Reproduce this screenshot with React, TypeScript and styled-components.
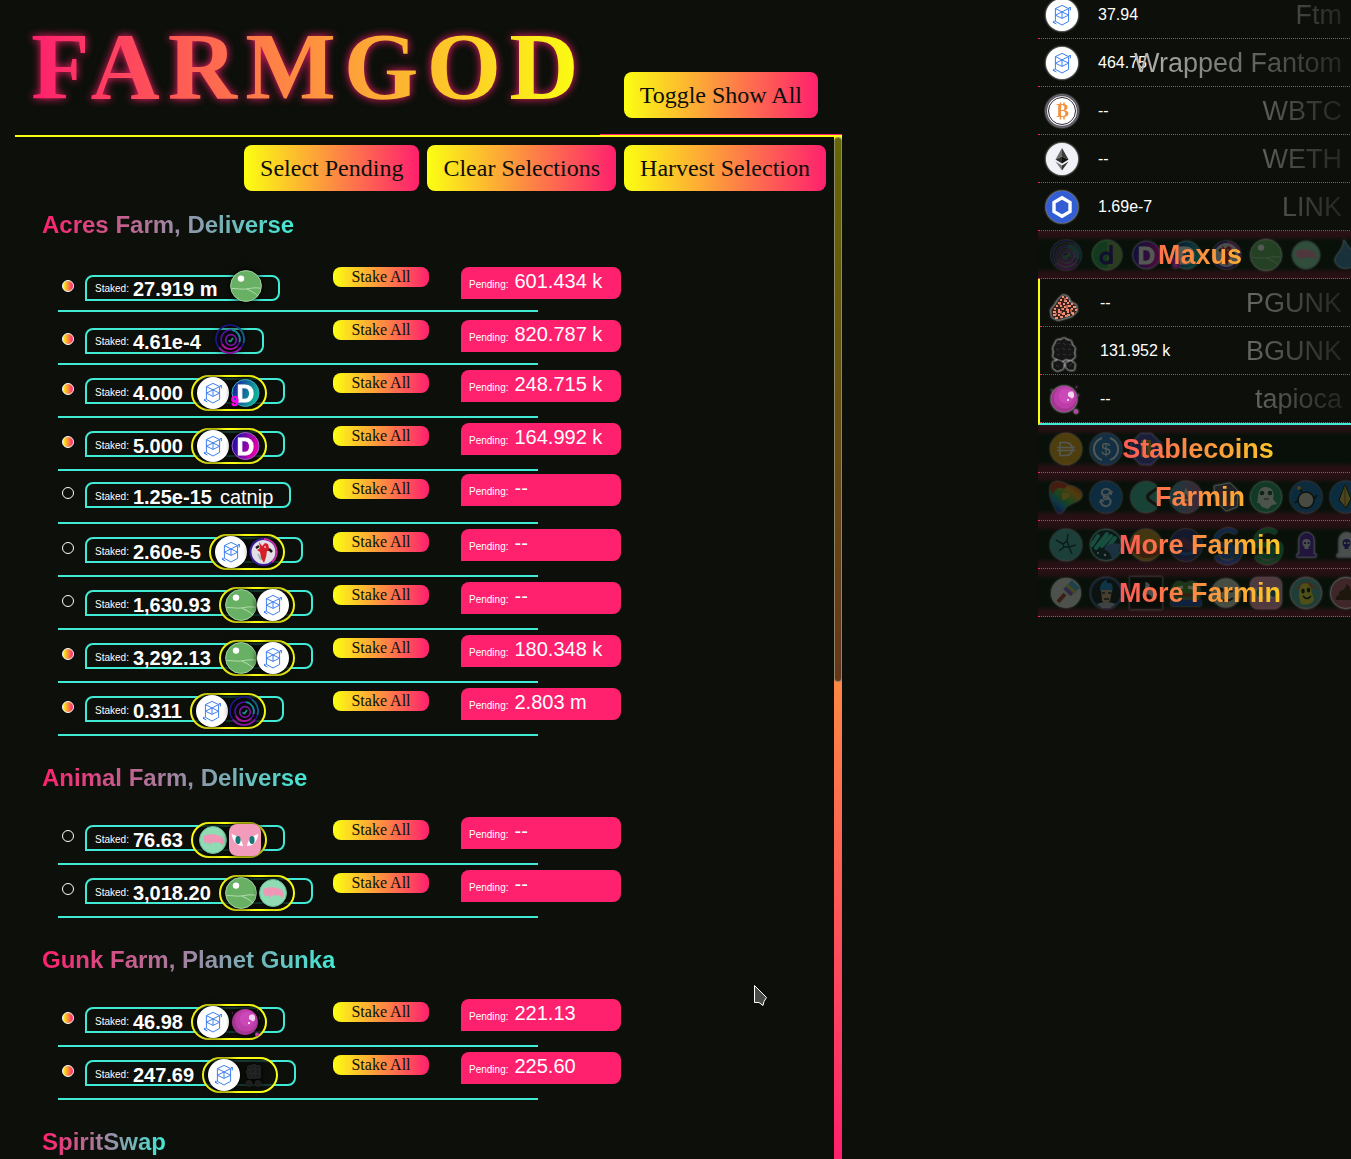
import React, { useState } from "react";
import styled, { createGlobalStyle, css } from "styled-components";

const ink = "#0c0f0a";
const pink = "#ff206e";
const yellow = "#fbff12";
const teal = "#41ead4";
const sans = '"Liberation Sans", Arial, sans-serif';
const serif = '"Liberation Serif", "Times New Roman", serif';

const GlobalStyle = createGlobalStyle`
  *, *::before, *::after { box-sizing: border-box; }
  body {
    margin: 0;
    background: ${ink};
    color: #fff;
    font-family: ${sans};
    overflow: hidden;
  }
`;

/* ---------- token artwork ---------- */

const Fantom = () => (
  <>
    <circle cx="16" cy="16" r="16" fill="#fff" />
    <g fill="none" stroke="#3f7ff0" strokeWidth="1" strokeLinejoin="round">
      <path d="M16 6.4 22.6 9.6V22.4L16 26 9.4 22.4V9.6Z" />
      <path d="M9.4 9.6 22.6 16.2M22.6 9.6 9.4 16.2 16 19.4 22.6 16.2M16 12.900V19.400" />
      <path d="M22.8 8.2 24.3 9.2V11.4M7.8 21.8V23.6L10.4 25" />
    </g>
    <circle cx="24.2" cy="8.8" r="0.9" fill="#3f7ff0" />
    <circle cx="7.8" cy="23.2" r="0.9" fill="#3f7ff0" />
  </>
);

const Acres = () => (
  <>
    <circle cx="16" cy="16" r="15.4" fill="#68b164" stroke="#9fd19b" />
    <circle cx="11" cy="8.6" r="3.2" fill="#fff" />
    <path
      d="M1.5 18.6C7 18.2 12 19.8 17 18.9S25 17.4 30.5 18.2M17 19.3C21 20.8 25 23 28 26"
      fill="none"
      stroke="#b4dcae"
    />
  </>
);

const Spiral = () => (
  <g fill="none" strokeWidth="1.7">
    <circle cx="16" cy="16" r="14" stroke="#1c1788" />
    <path d="M24 4.500A14 14 0 0 1 29.500 20" stroke="#0b6580" />
    <path d="M5 24.600A14 14 0 0 0 27 24.600" stroke="#8a179c" />
    <circle cx="16.500" cy="16.500" r="9.500" stroke="#4a12a0" />
    <path d="M18 7A9.500 9.500 0 0 1 25.500 19" stroke="#0e8f8f" />
    <path d="M8 21A9.500 9.500 0 0 0 23 23.500" stroke="#b01495" />
    <circle cx="17" cy="17" r="5.300" stroke="#7a16a8" />
    <path d="M14.500 17.500 16.500 18.500 19 15" stroke="#149a8e" />
  </g>
);

type LetterProps = {
  ring: string;
  from: string;
  to: string;
  letter: string;
  id: string;
  tag?: string;
};
const LetterCoin = ({ ring, from, to, letter, id, tag }: LetterProps) => (
  <>
    <defs>
      <linearGradient id={id} x1="0" x2="1" y1="0.300" y2="0.600">
        <stop offset="0.100" stopColor={from} />
        <stop offset="0.900" stopColor={to} />
      </linearGradient>
    </defs>
    <circle cx="16.500" cy="16" r="13.500" fill={`url(#${id})`} stroke={ring} />
    <text
      x="16.500"
      y="24.500"
      textAnchor="middle"
      fontFamily="Liberation Sans"
      fontWeight="700"
      fontSize="24"
      fill="#fff"
      stroke="#fff"
      strokeWidth="1"
    >
      {letter}
    </text>
    {tag && (
      <text
        x="2"
        y="29"
        fontFamily="Liberation Sans"
        fontWeight="700"
        fontSize="14"
        fill="#f0e"
        stroke="#f0e"
        strokeWidth="0.600"
      >
        {tag}
      </text>
    )}
  </>
);

const DeusTeal = () => (
  <LetterCoin id="dTeal" ring="#33b2bd" from="#1a2aa0" to="#10b09a" letter="D" tag="9" />
);
const DeusPink = () => (
  <LetterCoin id="dPink" ring="#a060d0" from="#2410a8" to="#e300a8" letter="D" />
);
const Dgreen = () => (
  <>
    <circle cx="17" cy="16" r="14.500" fill="#2f9950" stroke="#4ed06c" />
    <path d="M17 1.500A14.500 14.500 0 0 1 17 30.500Z" fill="#79a552" />
    <circle cx="16" cy="19" r="5" fill="none" stroke="#2a1080" strokeWidth="3.500" />
    <path d="M21 6V25" stroke="#2a1080" strokeWidth="3.500" />
  </>
);

const Parrot = () => (
  <>
    <circle cx="16.500" cy="16" r="13" fill="#e3dfe6" stroke="#3a1c9e" strokeWidth="2" />
    <path d="M17 3A13 13 0 0 1 25 26" fill="none" stroke="#cb2f9c" strokeWidth="2" />
    <path
      d="M12 6 15 10 18 7 21 8 22 12 24 15 20 15 19 21 17 27 14 22 13 16 10 14 13 12Z"
      fill="#d81f2a"
    />
    <path d="M9 12 12 10M22 13 25 16" stroke="#181818" strokeWidth="2.500" />
    <path d="M18 10V12" stroke="#fff" strokeWidth="1" />
    <path d="M11 18 14 24" stroke="#7fbfae" strokeWidth="1.500" />
  </>
);

const Pig = () => (
  <>
    <circle cx="16" cy="16" r="13.500" fill="#8fdcb4" stroke="#69b895" />
    <path
      d="M6.500 12C10 9.500 20 9.500 25 13L26.500 16 26 20 24.500 21 23 18.500 14 18.500 13 21.500 11.500 18.500 9 19 8.500 21 7.500 17.500 6 16Z"
      fill="#f096b7"
    />
  </>
);

const Cat = () => (
  <>
    <rect width="32" height="32" rx="8" fill="#f29bbb" />
    <path d="M2.500 10C9 12 13 15 14 22 8 22 4 18 2.500 10ZM29.500 10C23 12 19 15 18 22 24 22 28 18 29.500 10Z" fill="#fff" />
    <ellipse cx="9" cy="16" rx="2.600" ry="4" fill="#18757a" />
    <ellipse cx="23" cy="16" rx="2.600" ry="4" fill="#18757a" />
  </>
);

const Tapioca = () => (
  <>
    <circle cx="16" cy="16" r="13" fill="#a53593" />
    <circle cx="17" cy="14.500" r="11" fill="#bd3da9" />
    <circle cx="18" cy="13" r="7.500" fill="#cb48b8" />
    <path d="M20 10 22 8.500H25L26 11V14L24 15.500 20 13Z" fill="#f4d4ef" />
    <rect x="19" y="16" width="2" height="2" fill="#f4d4ef" />
    <circle cx="28" cy="28.500" r="2" fill="#c43cae" />
    <path d="M28 4h1M3 7h1M30 12h1" stroke="#a53593" />
  </>
);

const blobs = [
  [12, 9], [16, 8], [20, 9], [11, 13], [15, 12], [20, 13], [12, 17], [16, 17], [20, 17],
];
const BlackGunk = () => (
  <g fill="#1d1d1d" stroke="#2b2b2b" strokeWidth="0.700">
    {blobs.map(([x, y]) => (
      <circle key={`${x}-${y}`} cx={x - 2} cy={y} r="2.700" />
    ))}
    <circle cx="9" cy="24.500" r="3" />
    <circle cx="18" cy="24.500" r="3" />
  </g>
);

const BlackGunkLarge = () => (
  <>
    <g fill="#161616" stroke="#555" strokeWidth="1">
      <path d="M7 9 9 5 13 5 16 3 19 5 23 6 24 10 27 13 26 18 27 22 23 25 18 24 14 26 9 24 5 22 6 17 5 13Z" />
      <path d="M5 27 11 25 16 28 15 34 9 36 5 33ZM18 28 23 26 27 29 26 35 21 35 18 32Z" />
    </g>
    <path
      d="M9 9l3-1M15 8l3 2M21 9l2 2M8 14l3 1M14 13l3 2M20 14l3 1M9 20l3-1M15 19l3 1M21 20l2-1M8 30l3 2M21 31l3-2"
      stroke="#333"
      fill="none"
    />
  </>
);

const PinkGunk = () => (
  <>
    <path
      d="M10 13 15 8 20 10 22 15 28 18 29 24 24 29 10 33 4 30 3 23 7 18Z"
      fill="#3a211c"
      stroke="#555"
    />
    <g stroke="#ec8f74" fill="none">
      <path
        d="M14 10h2m2 1h2M12 13h2m2 1h3m2 0h1M10 16h3m2 1h2m2-1h2m2 1h2M8 19h2m2 0h2m2 1h2m2-1h3m2 1h3M6 22h2m2 1h2m2-1h2m2 1h3m2-1h2m2 1h2M5 25h3m2 0h3m2 1h2m2-1h2m2 1h3M5 28h3m2 0h2m2-1h3m2 1h3m2-1h2M7 31h3m2-1h3m2-1h3"
        strokeWidth="2"
      />
      <path d="M12 15v3m5-7v3m2 4v4m-6 2v3m-5-1v2m15-6v3m-4 3v2m-5-9v2" stroke="#d8705a" strokeWidth="1.500" />
    </g>
  </>
);

const Wbtc = () => (
  <>
    <circle cx="16" cy="16" r="15.600" fill="#fff" stroke="#5d5565" strokeWidth="1.500" />
    <circle cx="16" cy="16" r="13.500" fill="#fff" stroke="#2e2a33" strokeWidth="1" />
    <text x="16.500" y="22" textAnchor="middle" fontFamily="Liberation Serif" fontWeight="700" fontSize="19" fill="#f09242">
      B
    </text>
    <path d="M14.500 7.500V11M18 7.500V11M14.500 21V24.500M18 21V24.500" stroke="#f09242" strokeWidth="1.500" />
  </>
);

const Weth = () => (
  <>
    <circle cx="16" cy="16" r="16" fill="#f1f2f7" />
    <path d="M16 5V13.500L9.500 16.500Z" fill="#6f6f6f" />
    <path d="M16 5V13.500L22.500 16.500Z" fill="#3a3a3a" />
    <path d="M16 13.500V20.500L9.500 16.500Z" fill="#2f2f2f" />
    <path d="M16 13.500V20.500L22.500 16.500Z" fill="#111" />
    <path d="M9.500 18.500 16 22.500V27.500Z" fill="#777" />
    <path d="M22.500 18.500 16 22.500V27.500Z" fill="#333" />
  </>
);

const Link = () => (
  <>
    <circle cx="16" cy="16" r="16" fill="#335dd2" />
    <path d="M16 6.800 24 11.400V20.600L16 25.200 8 20.600V11.400Z" fill="none" stroke="#fff" strokeWidth="3.400" />
  </>
);

const Drop = () => (
  <path d="M14 1C17 9 27 14 26 22A11 10 0 0 1 5 22C5 15 14 12 14 1Z" fill="#3d7fae" stroke="#6aa6c8" />
);

const Dai = () => (
  <>
    <circle cx="16" cy="16" r="16" fill="#f0a91c" />
    <path d="M10 9.500H16A6.500 6.500 0 0 1 16 22.500H10ZM7 14.500H25M7 17.500H25" fill="none" stroke="#fff" strokeWidth="1.600" />
  </>
);

const Usdc = () => (
  <>
    <circle cx="16" cy="16" r="16" fill="#2e78c8" />
    <path d="M12 5A11.500 11.500 0 0 0 12 27M20 5A11.500 11.500 0 0 1 20 27" fill="none" stroke="#fff" strokeWidth="2" />
    <text x="16" y="22" textAnchor="middle" fontFamily="Liberation Sans" fontSize="17" fill="#fff">
      $
    </text>
  </>
);

const PixelCoin = () => (
  <>
    <path d="M11 1H21L31 11V21L21 31H11L1 21V11Z" fill="#4141a8" stroke="#6a5bd0" strokeDasharray="2 1" strokeWidth="2" />
    <rect x="11" y="7" width="10" height="17" fill="#c9a12c" />
    <path d="M16 9V22" stroke="#555" strokeWidth="2" />
  </>
);

const Curve = () => (
  <>
    <defs>
      <linearGradient id="rainbow" x1="1" y1="0" x2="0.200" y2="1">
        <stop offset="0" stopColor="#e3261a" />
        <stop offset="0.350" stopColor="#f2a51c" />
        <stop offset="0.600" stopColor="#3fc04e" />
        <stop offset="0.800" stopColor="#1b8bd6" />
        <stop offset="1" stopColor="#1a1cae" />
      </linearGradient>
    </defs>
    <path d="M0 8C0-1 10-1 18 4 26 6 33 9 32 15 31 21 20 22 16 26 12 34 8 34 5 27 3 22-1 17 0 8Z" fill="url(#rainbow)" />
    <path d="M0 8C0-1 10-1 18 4L14 8Q6 4 3 14Z" fill="#cf3a20" />
    <path d="M12 12Q18 11 20 14 18 19 12 19Z" fill="#e9b93a" />
  </>
);

const Dollarish = () => (
  <>
    <circle cx="16" cy="16" r="16" fill="#1b6dbb" />
    <path
      d="M21 12A5 5 0 0 0 12 10C11 14 14 15 16 16 19 17 22 19 20 23A5 5 0 0 1 11 21M18 12 21 13 22 10M14 20 11 19 10 22"
      fill="none"
      stroke="#dfeeff"
      strokeWidth="2"
    />
    <circle cx="16" cy="16" r="2.500" fill="none" stroke="#dfeeff" strokeWidth="1.500" />
  </>
);

const Chomp = () => (
  <path d="M27 5A15.500 15.500 0 1 0 27 27L18 21A6 6 0 0 1 18 11ZM19 16 28 9V23Z" fill="#3fb59e" />
);

const Peak = () => (
  <>
    <defs>
      <linearGradient id="peak">
        <stop offset="0" stopColor="#32a0b5" />
        <stop offset="1" stopColor="#c95a9b" />
      </linearGradient>
    </defs>
    <circle cx="16" cy="16" r="16" fill="url(#peak)" />
    <path d="M10 24 16 9 22 24M12 19H20" fill="none" stroke="#eee" strokeWidth="2" />
  </>
);

const Mask = () => (
  <>
    <path d="M4 5 20 2 28 10 27 26 16 30 6 20Z" fill="#58506a" stroke="#ddd" />
    <path d="M10 10 15 14M19 13 25 11M12 21 22 24" stroke="#e7315b" strokeWidth="2.500" />
  </>
);

const Ghost = () => (
  <>
    <circle cx="16" cy="16" r="15.500" fill="#2c9469" stroke="#55d798" />
    <path d="M7 22C9 18 6 7 15 6 25 6 24 15 23 18L27 23 22 24 18 28 12 26 9 22Z" fill="#e6eee8" />
    <circle cx="12" cy="12" r="2.300" fill="#164f38" />
    <circle cx="20" cy="12" r="2.300" fill="#164f38" />
    <path d="M14 18H19" stroke="#333" />
  </>
);

const Bomb = () => (
  <>
    <circle cx="16" cy="16" r="16" fill="#176ab5" />
    <circle cx="16" cy="19" r="8" fill="#d8d3c4" stroke="#111" strokeWidth="1.500" />
    <path d="M12 11 9 7M8 19 5 22M24 18 27 14" stroke="#111" strokeWidth="1.500" />
    <circle cx="9" cy="7" r="2" fill="#f5b52a" />
  </>
);

const Crystal = () => (
  <>
    <circle cx="16" cy="16" r="16" fill="#1770bd" />
    <path d="M15 3 21 18 16 27 9 19Z" fill="#e8c04c" stroke="#111" />
    <path d="M15 3V26" stroke="#8c6a1d" />
  </>
);

const Crack = () => (
  <>
    <circle cx="16" cy="16" r="16" fill="#4aaba9" />
    <path
      d="M6 11 13 15 17 12 18 5M13 15 14 18 9 22M14 18 19 18 22 25M19 18 26 16M17 12 19 18"
      fill="none"
      stroke="#143a3a"
      strokeWidth="1.500"
    />
  </>
);

const Splash = () => (
  <>
    <circle cx="16" cy="16" r="15.500" fill="#15333d" stroke="#46cdbb" />
    <path
      d="M2 16 8 7M6 19 17 5M12 17 21 7M17 19 25 9"
      stroke="#3ddcb6"
      strokeWidth="4"
      strokeLinecap="round"
    />
    <path d="M14 20Q20 12 30 15A15 15 0 0 1 22 30Q20 22 14 20Z" fill="#4a7fc0" />
    <circle cx="8" cy="24" r="1" fill="#fff" />
    <circle cx="15" cy="26" r="1.200" fill="#fff" />
  </>
);

const Sunny = () => (
  <>
    <circle cx="16" cy="16" r="16" fill="#c79020" />
    <path d="M3 21Q10 11 16 19T29 18V25Q16 34 3 23Z" fill="#ad4b1e" />
  </>
);

const Planet = () => (
  <>
    <circle cx="16" cy="16" r="16" fill="#30337f" />
    <path d="M1 12Q12 5 20 12T31 15V20Q20 24 13 18T1 18Z" fill="#7e2f66" />
    <path d="M3 20Q16 30 29 20" stroke="#2d62ba" strokeWidth="3" fill="none" />
  </>
);

const Swirl = ({ color }: { color: string }) => (
  <path
    d="M26 4A12 12 0 0 0 6 12M2 16H17A6 6 0 1 1 11 22M6 27A13 13 0 0 0 29 14"
    fill="none"
    stroke={color}
    strokeWidth="4"
  />
);
const SwirlBlue = () => <Swirl color="#1d59c4" />;
const SwirlGreen = () => <Swirl color="#119a4d" />;

const Tomb = ({ body, skull }: { body: string; skull: string }) => (
  <>
    <path d="M9 25V11A7.500 7.500 0 0 1 24 11V25H26V28H7V25Z" fill={body} stroke="#bba9e5" />
    <circle cx="16.500" cy="14" r="4" fill={skull} />
    <rect x="14.500" y="17" width="4" height="3" fill={skull} />
    <path d="M14 14h2M17.500 14h2" stroke={body} strokeWidth="2" />
  </>
);
const TombPurple = () => <Tomb body="#5b22b5" skull="#ddd" />;
const TombWhite = () => <Tomb body="#e2e0ea" skull="#4620a0" />;

const Brush = () => (
  <>
    <circle cx="16" cy="16" r="15" fill="#e9e6e4" />
    <path d="M13 12 22 3 30 11 20 19Z" fill="#56b3dc" />
    <path d="M17 8 26 16" stroke="#f0c541" strokeWidth="2.500" />
    <path d="M15 11 22 18" stroke="#b44ac0" strokeWidth="2.500" />
    <path d="M15 17 8 25" stroke="#b9402d" strokeWidth="4" />
  </>
);

const Wizard = () => (
  <>
    <circle cx="16" cy="16" r="15" fill="#15171d" stroke="#2548a8" strokeWidth="1.500" />
    <path d="M10 14Q9 6 17 2 15 7 21 6 24 10 22 15Z" fill="#1d87ce" />
    <path d="M11 13H22L20 24 16 27 12 24Z" fill="#d4a987" />
    <path d="M12 16h3M18 16h3M14 22h5" stroke="#222" strokeWidth="1.500" />
    <path d="M7 27Q16 23 26 27L20 31H12Z" fill="#b6b8c2" />
  </>
);

const InkSquare = () => (
  <>
    <rect width="32" height="32" fill="#080808" stroke="#333" />
    <path d="M15 5C20 6 21 9 18 12 24 12 26 17 22 23 22 18 19 16 15 18 12 14 17 10 15 5Z" fill="#ddd" />
  </>
);

const Frog = () => (
  <>
    <path d="M2 12Q6 0 15 7 25 0 30 11V21H2Z" fill="#4c8f2d" />
    <path d="M4 12 13 10M18 10 27 12" stroke="#fff" strokeWidth="3" />
    <path d="M1 23H31V29H1Z" fill="#1d4bb5" />
    <path d="M6 18H25" stroke="#993a28" strokeWidth="3" />
  </>
);

const Bear = () => (
  <>
    <circle cx="16" cy="16" r="14.500" fill="#d7d9c5" />
    <circle cx="11" cy="13" r="2.500" fill="#222" />
    <circle cx="21" cy="13" r="2.500" fill="#222" />
    <path d="M9 21Q16 27 23 21" stroke="#222" strokeWidth="2" fill="none" />
  </>
);

const Lemon = () => (
  <>
    <circle cx="16" cy="16" r="15.500" fill="#5da6a0" stroke="#bbb" />
    <path d="M6 12Q16-2 28 13L22 10Z" fill="#e0653f" />
    <path d="M11 8Q18 3 21 12L24 23Q20 29 11 27 7 17 11 8Z" fill="#eee33a" />
    <ellipse cx="13" cy="14" rx="1.700" ry="2.500" fill="#111" />
    <ellipse cx="18.500" cy="13" rx="1.700" ry="2.500" fill="#111" />
    <path d="M13 19Q17 24 21 19" fill="none" stroke="#111" strokeWidth="1.500" />
  </>
);

const Heap = () => (
  <>
    <circle cx="16" cy="16" r="15.500" fill="#bd5a72" stroke="#eee" />
    <path d="M16 7Q21 9 20 13 24 14 23 18 27 19 26 23H6Q5 19 9 18 8 14 13 13 16 11 16 7Z" fill="#4d2a18" />
  </>
);

const art = {
  Fantom, Acres, Spiral, DeusTeal, DeusPink, Dgreen, Parrot, Pig, Cat, Tapioca, BlackGunk,
  BlackGunkLarge, PinkGunk, Wbtc, Weth, Link, Drop, Dai, Usdc, PixelCoin, Curve, Dollarish,
  Chomp, Peak, Mask, Ghost, Bomb, Crystal, Crack, Splash, Sunny, Planet, SwirlBlue, SwirlGreen,
  TombPurple, TombWhite, Brush, Wizard, InkSquare, Frog, Bear, Lemon, Heap,
};
type ArtName = keyof typeof art;

const IconSvg = styled.svg<{ $glow?: boolean }>`
  display: block;
  flex: none;
  width: 32px;
  height: 32px;
  overflow: visible;
  filter: drop-shadow(0 0 ${(p) => (p.$glow ? "1px #fff" : "3px #000")});
`;

const TokenIcon = ({ name, glow }: { name: ArtName; glow?: boolean }) => {
  const Art = art[name];
  return (
    <IconSvg viewBox="0 0 32 32" $glow={glow} aria-hidden="true">
      <Art />
    </IconSvg>
  );
};

/* ---------- page ---------- */

const Page = styled.div`
  display: flex;
  justify-content: space-between;
  height: 100vh;
  padding-left: 15px;
  overflow: hidden;
`;

const Main = styled.main`
  display: flex;
  flex-direction: column;
  flex: 0 1 827px;
  min-width: 0;
`;

const Header = styled.header`
  display: flex;
  flex: none;
  align-items: flex-end;
  justify-content: space-between;
  border-bottom: 2px solid ${yellow};
`;

const Title = styled.h1`
  margin: 0 0 13px 16px;
  padding-top: 12px;
  font: 700 96px/110px ${serif};
  letter-spacing: 8px;
  color: transparent;
  background: linear-gradient(90deg, ${pink}, ${yellow});
  background-clip: text;
  filter: drop-shadow(0 0 4px ${pink});
`;

const HeaderActions = styled.div`
  padding: 16px 24px;
  border-bottom: 1px solid ${pink};
`;

const Button = styled.button<{ $small?: boolean }>`
  display: block;
  border: 0;
  border-radius: 8px;
  color: ${ink};
  background: linear-gradient(90deg, ${yellow}, ${pink});
  cursor: pointer;
  ${(p) =>
    p.$small
      ? css`
          width: 96px;
          height: 20px;
          padding: 0;
          font: 16px/20px ${serif};
        `
      : css`
          height: 46px;
          padding: 0 16px;
          font: 24px/46px ${serif};
        `}
`;

const ScrollFrame = styled.div`
  display: flex;
  flex: 1;
  min-height: 0;
`;

const ScrollContent = styled.div`
  flex: 1;
  min-width: 0;
  overflow-y: auto;
  scrollbar-width: none;
`;

const ScrollTrack = styled.div`
  flex: none;
  width: 8px;
  background: linear-gradient(${yellow}, ${pink});
`;

const ScrollThumb = styled.div`
  height: 545px;
  max-height: 100%;
  border: 1px solid rgba(160, 160, 140, 0.7);
  border-radius: 4px;
  background: rgba(0, 0, 0, 0.6);
`;

const Toolbar = styled.div`
  display: flex;
  justify-content: flex-end;
  gap: 8px;
  padding: 8px 8px 0;
`;

const FarmSection = styled.section`
  padding: 0 27px 8px;
`;

const FarmTitle = styled.h2`
  width: fit-content;
  margin: 20px 0;
  font: 700 24px/28px ${sans};
  color: transparent;
  background: linear-gradient(90deg, ${pink}, ${teal});
  background-clip: text;
`;

const PoolList = styled.ul`
  width: 480px;
  margin: 0 16px;
  padding: 0;
  list-style: none;
`;

const rise = { single: 8, pair: 5, text: 3 };
type PoolKind = keyof typeof rise;

const PoolRow = styled.li<{ $kind: PoolKind }>`
  display: grid;
  grid-template-columns: 27px 248px 128px 160px;
  align-items: start;
  height: 53px;
  padding-top: ${(p) => rise[p.$kind]}px;
  border-bottom: 2px solid ${teal};

  ${Button} {
    margin-top: ${(p) => 8 - rise[p.$kind]}px;
  }
`;

const PoolCheck = styled.input`
  appearance: none;
  width: 12px;
  height: 12px;
  margin: 13px 4px 0;
  border: 1px solid #fff;
  border-radius: 50%;

  &:checked {
    background: linear-gradient(90deg, ${yellow}, ${pink});
  }
`;

const StakedBox = styled.div<{ $raised: boolean }>`
  display: flex;
  align-items: center;
  width: fit-content;
  height: 26px;
  margin-top: 8px;
  padding: 0 16px 0 8px;
  border: 2px solid ${teal};
  border-radius: 8px 8px 8px 0;

  > span:first-child,
  > strong {
    padding-top: ${(p) => (p.$raised ? 2 : 4)}px;
  }
`;

const Caption = styled.span`
  font: 10px/12px ${sans};
`;

const StakedValue = styled.strong`
  margin-left: 4px;
  font: 700 20px/22px ${sans};
`;

const TokenText = styled.span`
  padding-top: 4px;
  margin-left: 8px;
  font: 20px/22px ${sans};
`;

const SingleToken = styled.span`
  margin: 0 0 4px 13px;
`;

const TokenPair = styled.span`
  display: flex;
  flex: none;
  margin: 4px 0 0 8px;
  padding: 0 4px;
  border: 2px solid ${yellow};
  border-radius: 18px;
  background: rgba(12, 15, 10, 0.8);
`;

const PendingBox = styled.div`
  display: flex;
  align-items: baseline;
  gap: 6px;
  height: 32px;
  padding: 0 8px;
  border-radius: 8px 8px 8px 0;
  background: ${pink};
`;

const PendingValue = styled.span`
  font: 20px/28px ${sans};
`;

const Wallet = styled.aside`
  flex: none;
  width: 313px;
  overflow: hidden;
`;

const WalletList = styled.div`
  width: 320px;
  margin-top: -9px;
`;

const BalanceRow = styled.div`
  display: grid;
  grid-template-columns: 60px 1fr;
  align-items: center;
  height: 48px;
  border-bottom: 1px dotted ${pink};

  > svg {
    grid-area: 1 / 1;
    margin-left: 8px;
  }
`;

const Amount = styled.span`
  grid-area: 1 / 2;
  font: 16px/20px ${sans};
`;

const TokenName = styled.span`
  grid-area: 1 / 1 / 2 / 3;
  padding-right: 16px;
  font: 27px/32px ${sans};
  text-align: right;
  color: transparent;
  background: linear-gradient(90deg, #fff, #171a15);
  background-clip: text;
`;

const OpenGroup = styled.div`
  border-left: 2px solid ${yellow};
  border-bottom: 2px solid ${teal};
`;

const GroupButton = styled.button`
  display: grid;
  align-items: center;
  width: 100%;
  height: 48px;
  padding: 0;
  border: 0;
  border-bottom: 1px dotted ${pink};
  background: linear-gradient(
    rgba(255, 32, 110, 0.13),
    rgba(255, 32, 110, 0.09) 12%,
    rgba(0, 20, 8, 0.3) 22%,
    rgba(0, 20, 8, 0.3) 78%,
    rgba(255, 32, 110, 0.09) 88%,
    rgba(255, 32, 110, 0.13)
  );
  overflow: hidden;
  cursor: pointer;
`;

const GroupIcons = styled.span`
  grid-area: 1 / 1;
  display: flex;
  gap: 8px;
  padding-left: 12px;
  opacity: 0.3;
`;

const GroupName = styled.span`
  position: relative;
  grid-area: 1 / 1;
  font: 700 27px/32px ${sans};
  text-align: center;
  color: transparent;
  background: linear-gradient(90deg, ${pink}, ${yellow});
  background-clip: text;
`;

const Pointer = styled.svg`
  position: absolute;
  left: 754px;
  top: 985px;
  width: 13px;
  height: 21px;
  pointer-events: none;
`;

/* ---------- data ---------- */

type Pool = {
  staked: string;
  tokens?: ArtName[];
  label?: string;
  pending: string;
  ready: boolean;
};

const farms: { title: string; pools: Pool[] }[] = [
  {
    title: "Acres Farm, Deliverse",
    pools: [
      { staked: "27.919 m", tokens: ["Acres"], pending: "601.434 k", ready: true },
      { staked: "4.61e-4", tokens: ["Spiral"], pending: "820.787 k", ready: true },
      { staked: "4.000", tokens: ["Fantom", "DeusTeal"], pending: "248.715 k", ready: true },
      { staked: "5.000", tokens: ["Fantom", "DeusPink"], pending: "164.992 k", ready: true },
      { staked: "1.25e-15", label: "catnip", pending: "--", ready: false },
      { staked: "2.60e-5", tokens: ["Fantom", "Parrot"], pending: "--", ready: false },
      { staked: "1,630.93", tokens: ["Acres", "Fantom"], pending: "--", ready: false },
      { staked: "3,292.13", tokens: ["Acres", "Fantom"], pending: "180.348 k", ready: true },
      { staked: "0.311", tokens: ["Fantom", "Spiral"], pending: "2.803 m", ready: true },
    ],
  },
  {
    title: "Animal Farm, Deliverse",
    pools: [
      { staked: "76.63", tokens: ["Pig", "Cat"], pending: "--", ready: false },
      { staked: "3,018.20", tokens: ["Acres", "Pig"], pending: "--", ready: false },
    ],
  },
  {
    title: "Gunk Farm, Planet Gunka",
    pools: [
      { staked: "46.98", tokens: ["Fantom", "Tapioca"], pending: "221.13", ready: true },
      { staked: "247.69", tokens: ["Fantom", "BlackGunk"], pending: "225.60", ready: true },
    ],
  },
  { title: "SpiritSwap", pools: [] },
];

type Balance = { icon: ArtName; amount: string; name: string };

const balances: Balance[] = [
  { icon: "Fantom", amount: "37.94", name: "Ftm" },
  { icon: "Fantom", amount: "464.75", name: "Wrapped Fantom" },
  { icon: "Wbtc", amount: "--", name: "WBTC" },
  { icon: "Weth", amount: "--", name: "WETH" },
  { icon: "Link", amount: "1.69e-7", name: "LINK" },
];

const groups: { name: string; icons: ArtName[]; open?: Balance[] }[] = [
  {
    name: "Maxus",
    icons: ["Spiral", "Dgreen", "DeusPink", "DeusTeal", "Parrot", "Acres", "Pig", "Drop"],
    open: [
      { icon: "PinkGunk", amount: "--", name: "PGUNK" },
      { icon: "BlackGunkLarge", amount: "131.952 k", name: "BGUNK" },
      { icon: "Tapioca", amount: "--", name: "tapioca" },
    ],
  },
  { name: "Stablecoins", icons: ["Dai", "Usdc", "PixelCoin"] },
  {
    name: "Farmin",
    icons: ["Curve", "Dollarish", "Chomp", "Peak", "Mask", "Ghost", "Bomb", "Crystal"],
  },
  {
    name: "More Farmin",
    icons: ["Crack", "Splash", "Sunny", "Planet", "SwirlBlue", "SwirlGreen", "TombPurple", "TombWhite"],
  },
  {
    name: "More Farmin",
    icons: ["Brush", "Wizard", "InkSquare", "Frog", "Bear", "Cat", "Lemon", "Heap"],
  },
];

const kindOf = (pool: Pool): PoolKind =>
  !pool.tokens ? "text" : pool.tokens.length > 1 ? "pair" : "single";

const PoolItem = ({ pool }: { pool: Pool }) => {
  const [selected, setSelected] = useState(pool.ready);
  const kind = kindOf(pool);
  return (
    <PoolRow $kind={kind}>
      <PoolCheck
        type="checkbox"
        checked={selected}
        onChange={(e) => setSelected(e.target.checked)}
        aria-label={`Select ${pool.staked}`}
      />
      <StakedBox $raised={kind === "single"}>
        <Caption>Staked:</Caption>
        <StakedValue>{pool.staked}</StakedValue>
        {kind === "text" && <TokenText>{pool.label}</TokenText>}
        {kind === "single" && (
          <SingleToken>
            <TokenIcon name={pool.tokens![0]} />
          </SingleToken>
        )}
        {kind === "pair" && (
          <TokenPair>
            {pool.tokens!.map((t) => (
              <TokenIcon key={t} name={t} />
            ))}
          </TokenPair>
        )}
      </StakedBox>
      <Button $small type="button">Stake All</Button>
      <PendingBox>
        <Caption>Pending:</Caption>
        <PendingValue>{pool.pending}</PendingValue>
      </PendingBox>
    </PoolRow>
  );
};

const BalanceItem = ({ icon, amount, name }: Balance) => (
  <BalanceRow>
    <TokenIcon name={icon} glow />
    <Amount>{amount}</Amount>
    <TokenName>{name}</TokenName>
  </BalanceRow>
);

export default function App() {
  return (
    <Page>
      <GlobalStyle />
      <Main>
        <Header>
          <Title>FARMGOD</Title>
          <HeaderActions>
            <Button type="button">Toggle Show All</Button>
          </HeaderActions>
        </Header>
        <ScrollFrame>
          <ScrollContent>
            <Toolbar>
              <Button type="button">Select Pending</Button>
              <Button type="button">Clear Selections</Button>
              <Button type="button">Harvest Selection</Button>
            </Toolbar>
            {farms.map((farm) => (
              <FarmSection key={farm.title}>
                <FarmTitle>{farm.title}</FarmTitle>
                <PoolList>
                  {farm.pools.map((pool) => (
                    <PoolItem key={pool.staked} pool={pool} />
                  ))}
                </PoolList>
              </FarmSection>
            ))}
          </ScrollContent>
          <ScrollTrack>
            <ScrollThumb />
          </ScrollTrack>
        </ScrollFrame>
      </Main>
      <Wallet>
        <WalletList>
          {balances.map((b) => (
            <BalanceItem key={b.name} {...b} />
          ))}
          {groups.map((group, i) => (
            <React.Fragment key={i}>
              <GroupButton type="button">
                <GroupIcons>
                  {group.icons.map((name) => (
                    <TokenIcon key={name} name={name} glow />
                  ))}
                </GroupIcons>
                <GroupName>{group.name}</GroupName>
              </GroupButton>
              {group.open && (
                <OpenGroup>
                  {group.open.map((b) => (
                    <BalanceItem key={b.name} {...b} />
                  ))}
                </OpenGroup>
              )}
            </React.Fragment>
          ))}
        </WalletList>
      </Wallet>
      <Pointer viewBox="0 0 13 21" aria-hidden="true">
        <path d="M0.500 0.500V17.500H5L9 20.500 10 16.500 12.500 12.500Z" fill="#4a4c49" stroke="#fff" />
      </Pointer>
    </Page>
  );
}
